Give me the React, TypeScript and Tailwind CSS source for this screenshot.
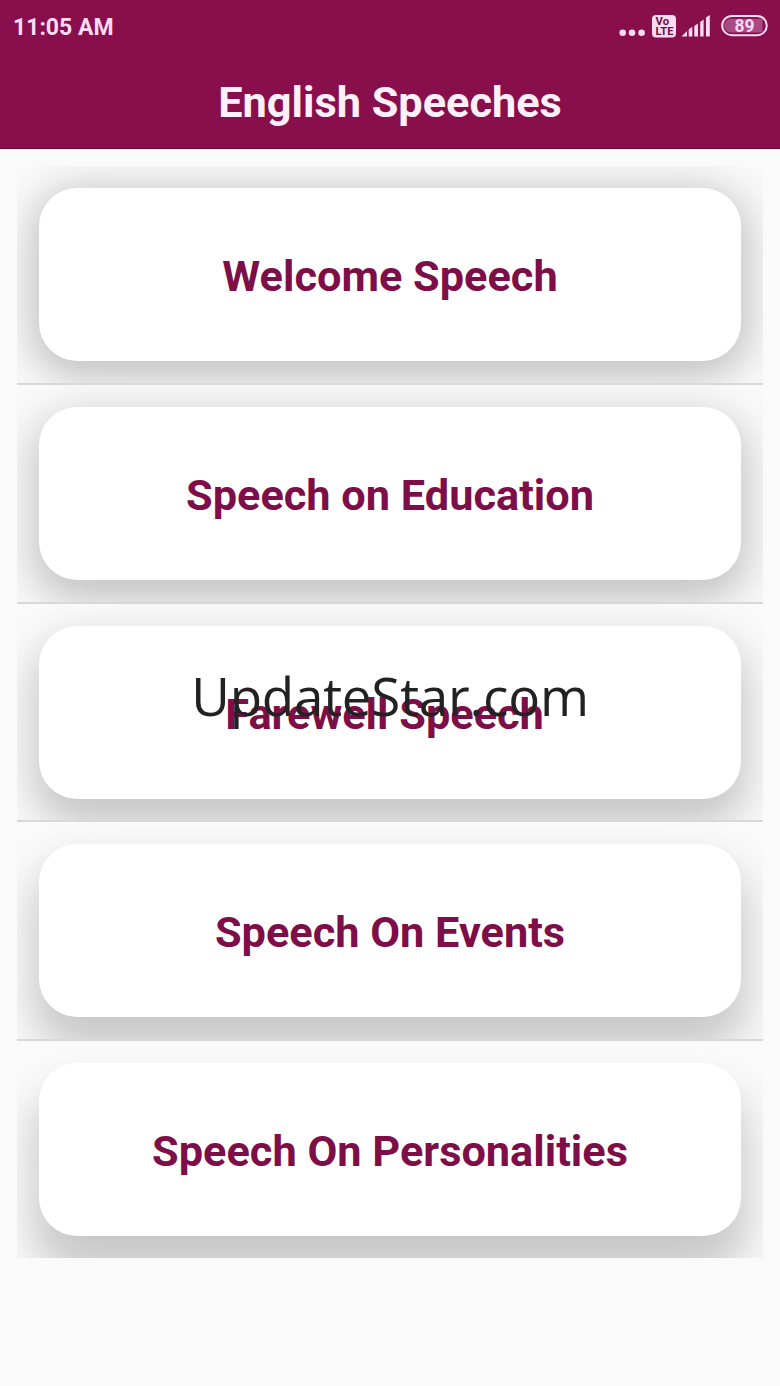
import React from 'react';

type Speech = {
  title: string;
  shadow: string;
};

const speeches: Speech[] = [
  { title: 'Welcome Speech', shadow: 'shadow-[0_9px_44px_7px_rgba(0,0,0,0.24)]' },
  { title: 'Speech on Education', shadow: 'shadow-[0_15px_44px_7px_rgba(0,0,0,0.22)]' },
  { title: 'Farewell Speech\u00a0', shadow: 'shadow-[0_21px_44px_6px_rgba(0,0,0,0.21)]' },
  { title: 'Speech On Events', shadow: 'shadow-[0_27px_44px_6px_rgba(0,0,0,0.205)]' },
  { title: 'Speech On Personalities', shadow: 'shadow-[0_33px_44px_6px_rgba(0,0,0,0.2)]' },
];

const StatusIcons: React.FC = () => (
  <svg width="152" height="30" viewBox="616 12 152 30" fill="#fbdcf3">
    <circle cx="622.7" cy="32.8" r="3.3" />
    <circle cx="632" cy="32.8" r="3.3" />
    <circle cx="641.6" cy="32.8" r="3.3" />
    <rect x="652" y="15" width="24" height="22.5" rx="4" />
    <g fill="#6b1043" fontFamily="Roboto, sans-serif" fontWeight="700">
      <text x="655.5" y="25" fontSize="10" textLength="13.5" lengthAdjust="spacingAndGlyphs">Vo</text>
      <text x="655.5" y="35.2" fontSize="10" textLength="18" lengthAdjust="spacingAndGlyphs">LTE</text>
    </g>
    <path d="M681.5 36.5L687 31V36.5Z" />
    <path d="M688.7 29.4L692.3 26.8V36.5H688.7Z" />
    <path d="M694.3 26L698 23.4V36.5H694.3Z" />
    <path d="M700.2 22L703.6 19.5V36.5H700.2Z" />
    <path d="M706 17.6L709.8 15V36.5H706Z" />
    <rect x="722.2" y="16" width="44.6" height="19.2" rx="9.6" fill="none" stroke="#fbdcf3" strokeWidth="2" />
    <path d="M731 18.8H762.5V32.5H731A6.8 6.8 0 0 1 731 18.8Z" fill="#a84a83" />
    <text x="734.5" y="32" fontSize="18.5" fontFamily="Roboto, sans-serif" fontWeight="700" textLength="20" lengthAdjust="spacingAndGlyphs">89</text>
  </svg>
);

const SpeechRow: React.FC<{ speech: Speech }> = ({ speech }) => (
  <li className="box-content h-[194.75px] overflow-hidden px-[22px] pt-[22px]">
    <button
      className={`flex h-[173px] w-full items-center justify-center rounded-[38px] bg-white pt-[6px] text-[43.3px] font-bold text-[#7e0e48] ${speech.shadow}`}
    >
      {speech.title}
    </button>
  </li>
);

const App: React.FC = () => {
  return (
    <div className="relative h-[1386px] w-[780px] overflow-hidden bg-[#fafafa] font-[Roboto,sans-serif]">
      <header className="h-[149px] border-b border-[#5c0a35] bg-[#880e4c]">
        <div className="flex h-[54px] items-center justify-between pl-[13px] pr-3 text-[#fbdcf3]">
          <span className="pt-[3px] text-[23px] font-bold">11:05 AM</span>
          <StatusIcons />
        </div>
        <h1 className="pt-[16px] text-center text-[43.3px] leading-[66px] font-bold text-[#fdf0fb]">
          English Speeches
        </h1>
      </header>

      <ul className="mx-[17px] mt-[17px] divide-y-2 divide-[#d8d8d8]">
        {speeches.map((speech) => (
          <SpeechRow key={speech.title} speech={speech} />
        ))}
      </ul>

      <div className="pointer-events-none absolute inset-x-0 top-[659px] text-center font-['Open_Sans',sans-serif] text-[53px] leading-[74px] tracking-[-0.25px] text-[#222]">
        UpdateStar.com
      </div>
    </div>
  );
};

export default App;
